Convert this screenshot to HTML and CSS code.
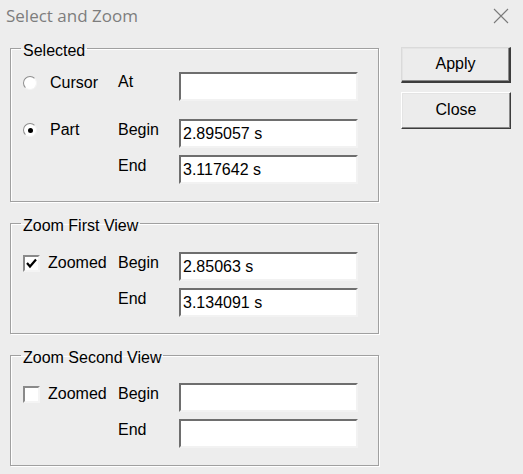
FILE: index.html
```html
<!DOCTYPE html>
<html>
<head>
<meta charset="utf-8">
<title>Select and Zoom</title>
<link rel="stylesheet" href="styles.css">
</head>
<body>
<div class="titlebar">
  <span class="title">Select and Zoom</span>
  <svg class="close-x" width="16" height="16" viewBox="0 0 16 16"><path d="M1 1 L15 15 M15 1 L1 15" stroke="#7a7a7a" stroke-width="1.1" fill="none"/></svg>
</div>
<div class="content">
  <div class="groups">
    <fieldset class="group g-selected">
      <legend>Selected</legend>
      <div class="grid">
        <div class="opt"><span class="radio"></span><span class="opt-label r-label">Cursor</span></div>
        <div class="lbl">At</div>
        <div class="field spaced"></div>

        <div class="opt"><span class="radio on"><span class="dot"></span></span><span class="opt-label r-label">Part</span></div>
        <div class="lbl">Begin</div>
        <div class="field">2.895057 s</div>

        <div></div>
        <div class="lbl">End</div>
        <div class="field">3.117642 s</div>
      </div>
    </fieldset>

    <fieldset class="group g-first">
      <legend>Zoom First View</legend>
      <div class="grid">
        <div class="opt"><span class="check on"><svg width="13" height="13" viewBox="0 0 13 13"><path d="M2 6 L5 9.5 L11 2.5" stroke="#000" stroke-width="2.2" fill="none"/></svg></span><span class="opt-label c-label">Zoomed</span></div>
        <div class="lbl">Begin</div>
        <div class="field">2.85063 s</div>
        <div></div>
        <div class="lbl">End</div>
        <div class="field">3.134091 s</div>
      </div>
    </fieldset>

    <fieldset class="group g-second">
      <legend>Zoom Second View</legend>
      <div class="grid">
        <div class="opt"><span class="check"></span><span class="opt-label c-label">Zoomed</span></div>
        <div class="lbl">Begin</div>
        <div class="field"></div>
        <div></div>
        <div class="lbl">End</div>
        <div class="field"></div>
      </div>
    </fieldset>
  </div>
  <div class="buttons">
    <div class="btn default">Apply</div>
    <div class="btn">Close</div>
  </div>
</div>
</body>
</html>
```
FILE: styles.css
```css
* { box-sizing: border-box; }
html, body {
  margin: 0;
  padding: 0;
  background: #ededed;
}
body {
  width: 523px;
  height: 474px;
  overflow: hidden;
  font-family: "Liberation Sans", Arial, sans-serif;
  font-size: 16px;
  color: #000;
}
.titlebar {
  height: 32px;
  display: flex;
  align-items: center;
  justify-content: space-between;
  padding: 0 14px 0 6px;
}
.title {
  font-family: "Open Sans", "Noto Sans", sans-serif;
  font-size: 17px;
  color: #7d7d7d;
  line-height: 20px;
}
.close-x { display: block; }
.content {
  display: flex;
  padding-left: 10px;
  gap: 22px;
}
.groups {
  width: 369px;
  display: flex;
  flex-direction: column;
  gap: 9px;
  padding-top: 4px;
}
.group {
  margin: 0;
  border: 1px solid #a0a0a0;
  box-shadow: inset 1px 1px 0 #fff, 1px 1px 0 #fff;
  padding: 12px 0 17px 12px;
  min-width: 0;
}
.group legend {
  padding: 6px 2px 0;
  margin-left: -2px;
  line-height: 18px;
}
.g-first { padding-top: 17px; padding-bottom: 16px; }
.g-second { padding-top: 16px; padding-bottom: 17px; }
.grid {
  display: grid;
  grid-template-columns: 95px 61px 179px;
  row-gap: 7px;
  align-items: start;
}
.field.spaced { margin-bottom: 11px; }
.opt {
  display: flex;
  align-items: center;
  height: 18px;
  margin-top: 2px;
}
.lbl {
  line-height: 18px;
  margin-top: 2px;
}
.g-selected .grid > .lbl:nth-child(2) { margin-top: 1px; }
.radio {
  width: 14px;
  height: 14px;
  border-radius: 50%;
  background: #fff;
  border: 1.5px solid;
  border-color: #8e8e8e #f4f4f4 #f4f4f4 #8e8e8e;
  display: flex;
  align-items: center;
  justify-content: center;
  flex: none;
}
.dot {
  width: 5px;
  height: 5px;
  border-radius: 50%;
  background: #000;
}
.r-label { margin-left: 13px; }
.check {
  width: 17px;
  height: 17px;
  background: #fff;
  border: 2px solid;
  border-color: #8a8a8a #f4f4f4 #f4f4f4 #8a8a8a;
  display: flex;
  align-items: center;
  justify-content: center;
  flex: none;
}
.check svg { display: block; }
.c-label { margin-left: 8px; }
.field {
  height: 29px;
  background: #fff;
  border: 2px solid;
  border-color: #6e6e6e #f2f2f2 #f2f2f2 #6e6e6e;
  padding: 3px 0 0 2px;
  line-height: 20px;
  white-space: nowrap;
}
.buttons {
  display: flex;
  flex-direction: column;
  gap: 9px;
  padding-top: 15px;
}
.btn {
  width: 110px;
  height: 37px;
  background: #ececec;
  border: 1px solid;
  border-color: #fff #3c3c3c #3c3c3c #fff;
  box-shadow: inset -1px -1px 0 #8a8a8a, inset 1px 1px 0 #e4e4e4;
  display: flex;
  align-items: center;
  justify-content: center;
  padding-bottom: 2px;
}
.btn.default {
  height: 36px;
  border-width: 1px 2px 2px 1px;
  border-color: #dadada #3c3c3c #3c3c3c #dadada;
}
```
